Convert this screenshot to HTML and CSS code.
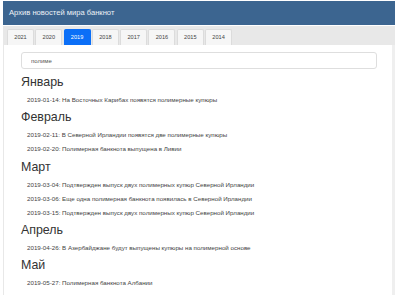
FILE: index.html
```html
<!DOCTYPE html>
<html lang="ru">
<head>
    <meta charset="UTF-8">
    <meta name="viewport" content="width=device-width, initial-scale=1.0">
    <title>Архив новостей мира банкнот</title>
    <link rel="stylesheet" href="styles.css">
</head>
<body>
    <div class="app">
        <div class="header">Архив новостей мира банкнот</div>
        <div class="tabs">
            <div class="tab">2021</div>
            <div class="tab">2020</div>
            <div class="tab active">2019</div>
            <div class="tab">2018</div>
            <div class="tab">2017</div>
            <div class="tab">2016</div>
            <div class="tab">2015</div>
            <div class="tab">2014</div>
        </div>
        <div class="content">
            <input class="search" type="text" value="полиме">

            <h2 class="month">Январь</h2>
            <div class="news">2019-01-14: На Восточных Карибах появятся полимерные купюры</div>

            <h2 class="month">Февраль</h2>
            <div class="news">2019-02-11: В Северной Ирландии появятся две полимерные купюры</div>
            <div class="news">2019-02-20: Полимерная банкнота выпущена в Ливии</div>

            <h2 class="month">Март</h2>
            <div class="news">2019-03-04: Подтвержден выпуск двух полимерных купюр Северной Ирландии</div>
            <div class="news">2019-03-06: Еще одна полимерная банкнота появилась в Северной Ирландии</div>
            <div class="news">2019-03-15: Подтвержден выпуск двух полимерных купюр Северной Ирландии</div>

            <h2 class="month">Апрель</h2>
            <div class="news">2019-04-26: В Азербайджане будут выпущены купюры на полимерной основе</div>

            <h2 class="month">Май</h2>
            <div class="news">2019-05-27: Полимерная банкнота Албании</div>
            <div class="news">2019-05-30: Вторая полимерная купюра Фиджи</div>
        </div>
    </div>
</body>
</html>
```

FILE: styles.css
```css
body {
    font-family: "Liberation Sans", Arial, sans-serif;
    margin: 0;
    padding: 0;
    background-color: #fff;
    color: #333;
    overflow: hidden;
}
.app {
    margin: 1px 3px 0 3px;
    width: 392px;
}
.header {
    height: 24px;
    line-height: 24px;
    padding-left: 6px;
    background-color: #3c6590;
    color: #eef2f7;
    font-size: 7.6px;
}
.tabs {
    margin-top: 1px;
    height: 19px;
    padding: 3px 0 0 4px;
    box-sizing: border-box;
    background-color: #e8e8e8;
    display: flex;
    gap: 1.3px;
}
.tab {
    width: 27px;
    height: 16px;
    box-sizing: border-box;
    border: 1px solid #dcdcdc;
    border-bottom: none;
    border-radius: 2px 2px 0 0;
    background-color: #f6f6f6;
    color: #444;
    font-size: 5.6px;
    line-height: 15px;
    text-align: center;
}
.tab.active {
    background-color: #0b6ff7;
    border-color: #0b6ff7;
    color: #fff;
}
.content {
    border-left: 1px solid #e8e8e8;
    border-right: 3px solid #efefef;
    padding: 7px 0 10px 17px;
}
.search {
    display: block;
    width: 356px;
    height: 17px;
    box-sizing: border-box;
    border: 1px solid #dedede;
    border-radius: 3px;
    padding: 0 0 0 9px;
    margin: 0 0 6px 0;
    font-family: inherit;
    font-size: 6px;
    color: #555;
    outline: none;
}
.month {
    font-size: 12.4px;
    font-weight: normal;
    line-height: 15px;
    margin: 3.3px 0 3px 0;
    color: #333;
}
.news {
    font-size: 6.2px;
    line-height: 14px;
    padding-left: 6px;
    color: #444;
}
```
